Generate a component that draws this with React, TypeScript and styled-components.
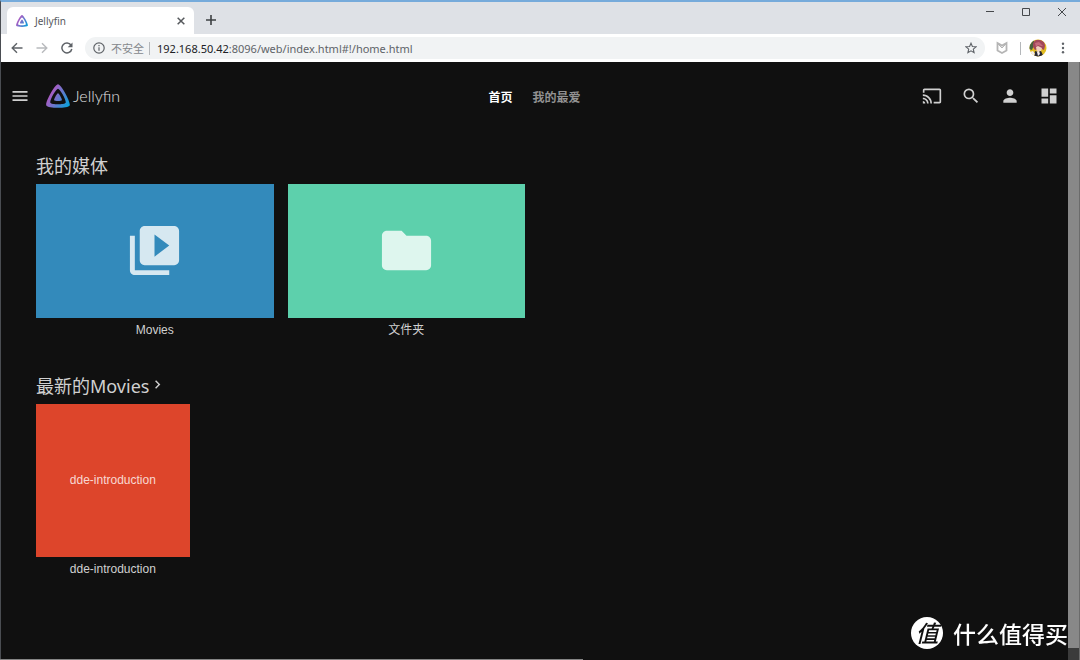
import React from "react";
import styled, { createGlobalStyle } from "styled-components";
import {
  MdCast,
  MdChevronRight,
  MdDashboard,
  MdFolder,
  MdMenu,
  MdPerson,
  MdSearch,
  MdVideoLibrary,
} from "react-icons/md";

const ui = `"Noto Sans", "Noto Sans CJK SC", sans-serif`;

const GlobalStyle = createGlobalStyle`
  * { box-sizing: border-box; }
  body { margin: 0; background: #101010; font-family: ${ui}; }
  button { border: 0; padding: 0; margin: 0; background: none; color: inherit; font: inherit; cursor: pointer; }
  a { color: inherit; text-decoration: none; }
  svg { display: block; flex: none; }
`;

const Window = styled.div`
  display: flex;
  flex-direction: column;
  min-height: 100vh;
  border-top: 2px solid #76abdb;
  border-left: 1px solid #4a4d52;
`;

const TabStrip = styled.header`
  display: flex;
  align-items: flex-end;
  height: 32px;
  padding-left: 6px;
  background: #dee1e6;
`;

const Tab = styled.div`
  display: flex;
  align-items: center;
  width: 187px;
  height: 27px;
  padding: 0 8px 0 9px;
  border-radius: 6px 6px 0 0;
  background: #fff;
  color: #55585c;
  font-size: 10px;
`;

const TabTitle = styled.span`
  flex: 1;
  padding-left: 7px;
`;

const IconButton = styled.button<{ $size?: number; $muted?: boolean }>`
  display: flex;
  align-items: center;
  justify-content: center;
  flex: none;
  width: ${(p) => p.$size ?? 20}px;
  height: ${(p) => p.$size ?? 20}px;
  ${(p) => p.$muted && "color: #b8babd;"}
`;

const NewTab = styled(IconButton)`
  margin: 0 auto 4px 7px;
  color: #3c4043;
`;

const WindowControls = styled.div`
  display: flex;
  align-self: flex-start;
  gap: 16px;
  padding-right: 8px;
  color: #45484c;
`;

const AddressBar = styled.nav`
  display: flex;
  align-items: center;
  height: 28px;
  padding: 0 9px 0 6px;
  background: #fff;
  color: #5f6368;
`;

const NavButtons = styled.div`
  display: flex;
  gap: 5px;
`;

const Omnibox = styled.div`
  display: flex;
  align-items: center;
  flex: 1;
  height: 22px;
  margin: 0 7px 0 8px;
  padding: 0 4px 0 8px;
  border-radius: 11px;
  background: #f1f3f4;
  font-size: 11px;
`;

const Insecure = styled.span`
  padding: 0 5px 0 6px;
  color: #85888c;
`;

const Divider = styled.span`
  width: 1px;
  height: 13px;
  background: #b4b7ba;
`;

const Url = styled.span`
  flex: 1;
  padding-left: 7px;
  b { color: #202124; font-weight: 400; }
`;

const Extensions = styled.div`
  display: flex;
  align-items: center;
  gap: 8px;
`;

const Viewport = styled.div`
  display: flex;
  flex: 1;
  background: #101010;
  color: #d0d0d0;
`;

const Page = styled.div`
  flex: 1;
  min-width: 0;
`;

const Scrollbar = styled.div`
  display: flex;
  width: 12px;
  padding-bottom: 12px;
  border-right: 1px solid #6b6b6b;
  background: #3b3b3b;
`;

const Thumb = styled.div`
  flex: 1;
  background: #888;
`;

const AppBar = styled.header`
  display: grid;
  grid-template-columns: 1fr auto 1fr;
  align-items: center;
  height: 68px;
  padding: 0 9px;
`;

const Brand = styled.div`
  display: flex;
  align-items: center;
  gap: 16px;
`;

const BrandLink = styled.a`
  display: flex;
  align-items: center;
  gap: 3px;
  font: 300 16px/20px Lato, sans-serif;
  color: #e0e0e0;
`;

const Tabs = styled.nav`
  display: flex;
  gap: 20px;
  padding-top: 4px;
`;

const TabLink = styled.a<{ $active?: boolean }>`
  font-size: 12px;
  line-height: 16px;
  font-weight: 700;
  color: ${(p) => (p.$active ? "#fff" : "#929292")};
`;

const Tools = styled.div`
  display: flex;
  justify-content: flex-end;
  gap: 19px;
`;

const Main = styled.main`
  padding: 22px 40px 0 35px;
`;

const Section = styled.section`
  margin-bottom: 34px;
`;

const SectionTitle = styled.h2`
  display: flex;
  align-items: center;
  height: 26px;
  margin: 0 0 6px;
  font-size: 18px;
  font-weight: 400;
`;

const TitleLink = styled.a`
  display: flex;
  align-items: center;
`;

const Cards = styled.div<{ $columns: number }>`
  display: grid;
  grid-template-columns: repeat(${(p) => p.$columns}, 1fr);
  gap: 14px;
`;

const Card = styled.a`
  font: 12px/16px "Liberation Sans", "Noto Sans CJK SC", sans-serif;
  text-align: center;
`;

const Cover = styled.div<{ $color: string; $ratio: string }>`
  display: flex;
  align-items: center;
  justify-content: center;
  aspect-ratio: ${(p) => p.$ratio};
  margin-bottom: 4px;
  background: ${(p) => p.$color};
  color: rgba(255, 255, 255, 0.8);
`;

const BottomEdge = styled.div`
  position: fixed;
  left: 0;
  bottom: 0;
  width: 54%;
  height: 1px;
  background: #858585;
`;

const Watermark = styled.div`
  position: fixed;
  right: 12px;
  bottom: 10px;
  display: flex;
  align-items: center;
  gap: 10px;
  color: #fff;
  font: 500 23px/34px "Noto Sans CJK SC", sans-serif;
`;

const Seal = styled.span`
  width: 32px;
  height: 32px;
  border-radius: 50%;
  background: #fff;
  color: #101010;
  line-height: 30px;
  font-style: italic;
  text-align: center;
`;

function Logo({ size, id }: { size: number; id: string }) {
  return (
    <svg width={size} height={size} viewBox="20 20 472 472" aria-hidden="true">
      <defs>
        <linearGradient id={id} gradientUnits="userSpaceOnUse" x1="110" y1="213" x2="496" y2="436">
          <stop offset="0" stopColor="#aa5cc3" />
          <stop offset="1" stopColor="#00a4dc" />
        </linearGradient>
      </defs>
      <g fill={`url(#${id})`}>
        <path d="M256 201.6c-20.4 0-86.2 119.3-76.2 139.4s142.5 19.9 152.4 0S276.5 201.6 256 201.6z" />
        <path
          fillRule="evenodd"
          d="M256 23.3c-61.6 0-259.8 359.4-229.6 420.1s429.3 60 459.2 0S317.6 23.3 256 23.3zm150.5 367.5c-19.6 39.3-281.1 39.8-300.9 0s110.1-275.3 150.4-275.3 170.1 235.9 150.5 275.3z"
        />
      </g>
    </svg>
  );
}

function Line({ d, size = 12, width = 1.4 }: { d: string; size?: number; width?: number }) {
  return (
    <svg width={size} height={size} viewBox="0 0 12 12" fill="none" stroke="currentColor" strokeWidth={width} aria-hidden="true">
      <path d={d} />
    </svg>
  );
}

function Shield() {
  return (
    <svg width="12" height="14" viewBox="0 0 12 14" fill="none" stroke="#b5b5b5" strokeWidth="1.8" aria-hidden="true">
      <path d="M1.5 2v7.5L6 12l4.500-2.500V2L6 4.600z" />
      <path d="M1.500 2.500L6 7l4.500-4.500" strokeWidth="1" />
    </svg>
  );
}

function Avatar() {
  return (
    <svg width="18" height="18" viewBox="0 0 18 18" aria-hidden="true">
      <defs>
        <clipPath id="avatar"><circle cx="9" cy="9" r="8.5" /></clipPath>
      </defs>
      <g clipPath="url(#avatar)">
        <path fill="#e3bd22" d="M0 0h18v18H0z" />
        <path fill="#47613b" d="M0 3l5-3v6l-2 5-3-1z" />
        <path fill="#a34859" d="M4 5q1-5 7-4 5 1 5 6l-1 4-4-2-5 2-2-3z" />
        <path fill="#f1cfbd" d="M7 8l2-1 4 2-1 3-4 1z" />
        <path fill="#c46a7b" d="M6 4l4-1 4 4-2 0-3-1-2 2z" />
        <path fill="#282733" d="M5 18l1-6 3 1 3-1 3 6z" />
        <path fill="#f4eeee" d="M8 13l2-1 1 3-2 2zM1 13l3-1 2 3-2 2z" />
      </g>
    </svg>
  );
}

export default function App() {
  return (
    <>
      <GlobalStyle />
      <Window>
        <TabStrip>
          <Tab>
            <Logo size={12} id="favicon" />
            <TabTitle>Jellyfin</TabTitle>
            <IconButton $size={10} aria-label="Close tab"><Line size={10} d="M2 2l8 8M10 2l-8 8" width={1.8} /></IconButton>
          </Tab>
          <NewTab aria-label="New tab"><Line d="M6 1v10M1 6h10" width={1.6} /></NewTab>
          <WindowControls>
            <IconButton aria-label="Minimize"><Line d="M2 5.500h8" width={1} /></IconButton>
            <IconButton aria-label="Maximize"><Line d="M2.500 2.500h7v7h-7z" width={1} /></IconButton>
            <IconButton aria-label="Close"><Line d="M2 2l8 8M10 2l-8 8" width={1} /></IconButton>
          </WindowControls>
        </TabStrip>
        <AddressBar>
          <NavButtons>
            <IconButton aria-label="Back"><Line d="M11.500 6H1.500M6 1.200L1.200 6 6 10.800" /></IconButton>
            <IconButton aria-label="Forward" $muted><Line d="M.5 6h10M6 1.200L10.800 6 6 10.800" /></IconButton>
            <IconButton aria-label="Reload">
              <svg width="12" height="12" viewBox="0 0 12 12" aria-hidden="true">
                <path d="M10 3a5 5 0 1 0 .8 4" fill="none" stroke="currentColor" strokeWidth="1.5" />
                <path d="M11.500.5v4.800H6.700z" fill="currentColor" />
              </svg>
            </IconButton>
          </NavButtons>
          <Omnibox>
            <Line d="M6 .8a5.2 5.2 0 1 0 0 10.4A5.2 5.2 0 1 0 6 .8M6 5.2v3.6M6 3v1.3" width={1.2} />
            <Insecure>不安全</Insecure>
            <Divider />
            <Url><b>192.168.50.42</b>:8096/web/index.html#!/home.html</Url>
            <IconButton aria-label="Bookmark">
              <Line d="M6 1.2l1.4 3.3 3.6.3-2.7 2.4.8 3.5L6 8.8l-3.1 1.9.8-3.5L1 4.8l3.6-.3z" width={1.1} />
            </IconButton>
          </Omnibox>
          <Extensions>
            <IconButton aria-label="Extension"><Shield /></IconButton>
            <Divider />
            <IconButton aria-label="Profile" $size={18}><Avatar /></IconButton>
            <IconButton aria-label="Browser menu" $size={16}>
              <svg width="4" height="12" viewBox="0 0 4 12" fill="currentColor" aria-hidden="true">
                <circle cx="2" cy="1.8" r="1.2" />
                <circle cx="2" cy="6" r="1.2" />
                <circle cx="2" cy="10.2" r="1.2" />
              </svg>
            </IconButton>
          </Extensions>
        </AddressBar>
        <Viewport>
          <Page>
            <AppBar>
              <Brand>
                <IconButton aria-label="Menu"><MdMenu size={20} /></IconButton>
                <BrandLink href="#home"><Logo size={24} id="brand" />Jellyfin</BrandLink>
              </Brand>
              <Tabs>
                <TabLink href="#home" $active>首页</TabLink>
                <TabLink href="#favorites">我的最爱</TabLink>
              </Tabs>
              <Tools>
                <IconButton aria-label="Cast"><MdCast size={20} /></IconButton>
                <IconButton aria-label="Search"><MdSearch size={20} /></IconButton>
                <IconButton aria-label="User"><MdPerson size={20} /></IconButton>
                <IconButton aria-label="Dashboard"><MdDashboard size={20} /></IconButton>
              </Tools>
            </AppBar>
            <Main>
              <Section>
                <SectionTitle>我的媒体</SectionTitle>
                <Cards $columns={4}>
                  <Card href="#movies">
                    <Cover $color="#338abb" $ratio="16 / 9"><MdVideoLibrary size={59} /></Cover>
                    Movies
                  </Card>
                  <Card href="#folders">
                    <Cover $color="#5dd0ac" $ratio="16 / 9"><MdFolder size={59} /></Cover>
                    文件夹
                  </Card>
                </Cards>
              </Section>
              <Section>
                <SectionTitle>
                  <TitleLink href="#latest">最新的Movies<MdChevronRight size={17} /></TitleLink>
                </SectionTitle>
                <Cards $columns={6}>
                  <Card href="#dde-introduction">
                    <Cover $color="#dd452b" $ratio="1">dde-introduction</Cover>
                    dde-introduction
                  </Card>
                </Cards>
              </Section>
            </Main>
          </Page>
          <Scrollbar><Thumb /></Scrollbar>
        </Viewport>
      </Window>
      <BottomEdge />
      <Watermark><Seal>值</Seal>什么值得买</Watermark>
    </>
  );
}
